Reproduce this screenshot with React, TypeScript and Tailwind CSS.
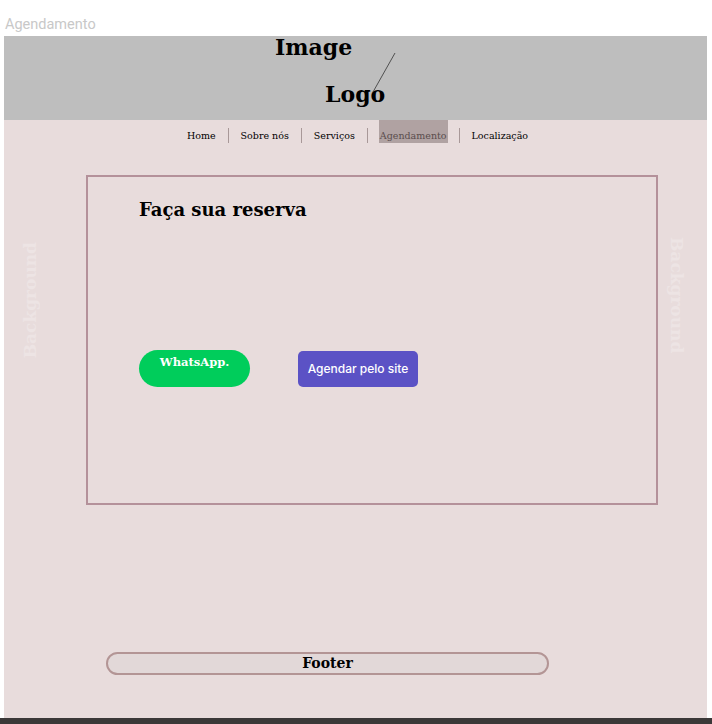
import React from "react";

const serif = "font-['DejaVu_Serif',serif]";

export default function App() {
  const navItems = ["Home", "Sobre nós", "Serviços", "Agendamento", "Localização"];
  return (
    <div className="relative w-[712px] h-[724px] bg-white overflow-hidden">
      <div className="h-[36px] pl-[5px] pt-[17px] text-[14.5px] leading-[16px] text-[#c8c8c8] font-['Roboto',sans-serif]">
        Agendamento
      </div>
      <div className="ml-[4px] w-[703px]">
        <div className="relative h-[84px] bg-[#bebebe]">
          <div className={`${serif} font-bold text-black text-[22px] leading-none`}>
            <div className="pl-[271px] pt-[0px]">Image</div>
            <div className="pl-[321px] pt-[25px]">Logo</div>
          </div>
          <svg className="absolute left-0 top-0" width="703" height="84">
            <line x1="391" y1="17" x2="369" y2="56" stroke="#333" strokeWidth="0.8" />
          </svg>
        </div>
        <div className="relative h-[598px] bg-[#e8dcdc]">
          <div className="flex h-[23px] items-end justify-center pl-[4px]">
            {navItems.map((item, i) => (
              <React.Fragment key={item}>
                {i > 0 && <div className="mx-[11px] h-[15px] w-px bg-[#a89898]" />}
                <div
                  className={`${serif} h-[23px] pt-[10px] leading-[12px] px-[1px] text-[9.5px] ${
                    item === "Agendamento" ? "bg-[#b0a2a2] text-[#5a4d4d]" : "text-black"
                  }`}
                >
                  {item}
                </div>
              </React.Fragment>
            ))}
          </div>
          <div className="mt-[32px] ml-[82px] h-[330px] w-[572px] border-2 border-[#b4919a]">
            <div className={`${serif} font-bold pl-[51px] pt-[21px] text-[18px] leading-[24px] text-black`}>
              Faça sua reserva
            </div>
            <div className="mt-[128px] flex items-start pl-[51px]">
              <div className={`${serif} h-[37px] w-[111px] rounded-full bg-[#00cd5b] pt-[4px] text-center text-[11.5px] font-bold text-white`}>
                WhatsApp.
              </div>
              <div className="ml-[48px] mt-[1px] flex h-[36px] w-[120px] items-center justify-center rounded-[5px] bg-[#5b52c5] font-['Inter',sans-serif] text-[12px] font-medium text-white">
                Agendar pelo site
              </div>
            </div>
          </div>
          <div className="mt-[147px] ml-[102px] flex h-[23px] w-[443px] items-center justify-center rounded-full border-2 border-[#b39595] bg-[#e2d8d8]">
            <span className={`${serif} font-bold text-[14px] text-black`}>Footer</span>
          </div>
          <div
            className={`${serif} absolute left-[18px] top-[122px] font-bold text-[17px] leading-none text-[#ede4e4] [writing-mode:vertical-rl] rotate-180`}
          >
            Background
          </div>
          <div
            className={`${serif} absolute left-[664px] top-[117px] font-bold text-[17px] leading-none text-[#ede4e4] [writing-mode:vertical-rl]`}
          >
            Background
          </div>
        </div>
      </div>
      <div className="h-[6px] w-full bg-[#3b3838]" />
    </div>
  );
}
